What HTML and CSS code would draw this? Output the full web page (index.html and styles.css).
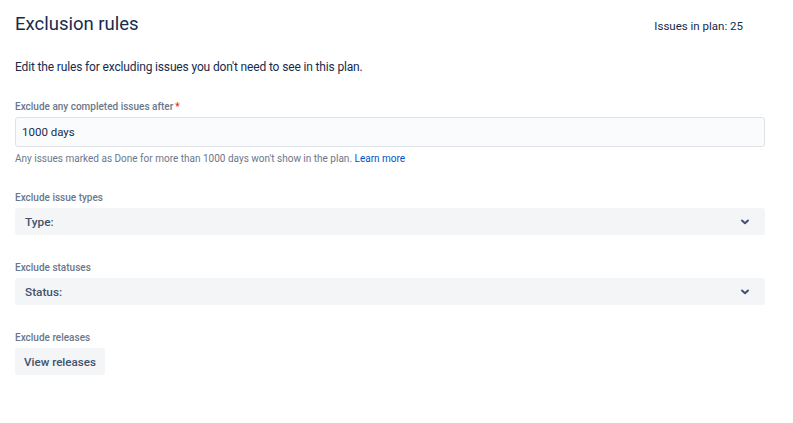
FILE: index.html
```html
<!DOCTYPE html>
<html>
<head>
<meta charset="utf-8">
<link rel="stylesheet" href="styles.css">
</head>
<body>
<div class="page">
  <div class="header">
    <h1 class="title">Exclusion rules</h1>
    <div class="count">Issues in plan: 25</div>
  </div>
  <p class="desc">Edit the rules for excluding issues you don't need to see in this plan.</p>

  <div class="field first">
    <div class="label">Exclude any completed issues after<span class="req">*</span></div>
    <div class="input">1000 days</div>
    <div class="helper">Any issues marked as Done for more than 1000 days won't show in the plan. <a class="link">Learn more</a></div>
  </div>

  <div class="field after-helper">
    <div class="label">Exclude issue types</div>
    <div class="select"><span>Type:</span>
      <svg class="chev" width="10" height="8" viewBox="0 0 10 8"><path d="M2 2.5 L5 5.3 L8 2.5" fill="none" stroke="#42526e" stroke-width="2" stroke-linecap="round" stroke-linejoin="round"/></svg>
    </div>
  </div>

  <div class="field">
    <div class="label">Exclude statuses</div>
    <div class="select"><span>Status:</span>
      <svg class="chev" width="10" height="8" viewBox="0 0 10 8"><path d="M2 2.5 L5 5.3 L8 2.5" fill="none" stroke="#42526e" stroke-width="2" stroke-linecap="round" stroke-linejoin="round"/></svg>
    </div>
  </div>

  <div class="field">
    <div class="label">Exclude releases</div>
    <div><button class="btn">View releases</button></div>
  </div>
</div>
</body>
</html>
```
FILE: styles.css
```css
html, body {
  margin: 0;
  padding: 0;
  background: #fff;
}
body {
  font-family: Roboto, "Open Sans", sans-serif;
  color: #172b4d;
}
.page {
  width: 750px;
  padding: 12px 0 0 15px;
}
.header {
  display: flex;
  justify-content: space-between;
  align-items: flex-start;
}
.title {
  margin: 0;
  font-size: 18.5px;
  line-height: 24px;
  font-weight: 400;
  color: #172b4d;
}
.count {
  font-size: 11.5px;
  line-height: 16px;
  margin-top: 6px;
  margin-right: 22px;
  color: #172b4d;
}
.desc {
  margin: 21px 0 0;
  font-size: 12px;
  letter-spacing: -0.15px;
  line-height: 20px;
}
.field {
  display: flex;
  flex-direction: column;
}
.label {
  font-size: 10px;
  line-height: 16px;
  font-weight: 500;
  color: #6b778c;
  margin-top: 25px;
  margin-bottom: 2px;
}
.first .label {
  margin-top: 22px;
  margin-bottom: 2px;
}
.after-helper .label {
  margin-top: 23px;
}
.req {
  color: #de350b;
  margin-left: 2px;
}
.input {
  box-sizing: border-box;
  height: 30px;
  border: 1.5px solid #dfe1e6;
  border-radius: 3px;
  background: #fafbfc;
  padding: 0 6px;
  display: flex;
  align-items: center;
  font-size: 11.5px;
  color: #172b4d;
}
.helper {
  font-size: 10px;
  line-height: 16px;
  color: #6b778c;
  margin-top: 4px;
}
.link {
  color: #0052cc;
  cursor: pointer;
}
.select {
  box-sizing: border-box;
  height: 27px;
  background: #f4f5f7;
  border-radius: 3px;
  padding: 0 15px 0 10px;
  display: flex;
  align-items: center;
  justify-content: space-between;
  font-size: 11.8px;
  font-weight: 500;
  color: #42526e;
}
.btn {
  box-sizing: border-box;
  height: 27px;
  border: none;
  border-radius: 3px;
  background: #f4f5f7;
  padding: 0 9px;
  font-family: inherit;
  font-size: 11.6px;
  font-weight: 500;
  color: #42526e;
}
```
